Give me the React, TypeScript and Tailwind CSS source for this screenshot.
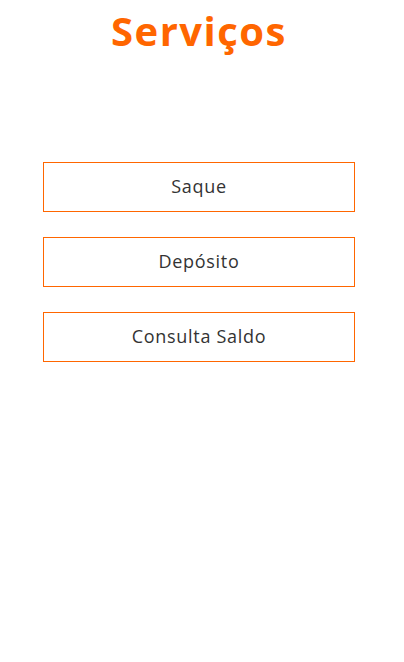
import React from "react";

const servicos = ["Saque", "Depósito", "Consulta Saldo"];

const App: React.FC = () => {
  return (
    <div className="min-h-screen bg-white font-['Open_Sans',sans-serif]">
      <div className="w-[398px] flex flex-col items-center">
        <h1 className="mt-[5px] text-[40px] leading-[52px] font-bold text-[#ff6600] tracking-[1.5px]">
          Serviços
        </h1>
        <div className="mt-[105px] flex flex-col gap-[25px]">
          {servicos.map((s) => (
            <button
              key={s}
              className="w-[312px] h-[50px] border border-[#ff6600] bg-white text-[18px] text-[#333333] tracking-[0.7px] flex items-center justify-center pb-[1px]"
            >
              {s}
            </button>
          ))}
        </div>
      </div>
    </div>
  );
};

export default App;
